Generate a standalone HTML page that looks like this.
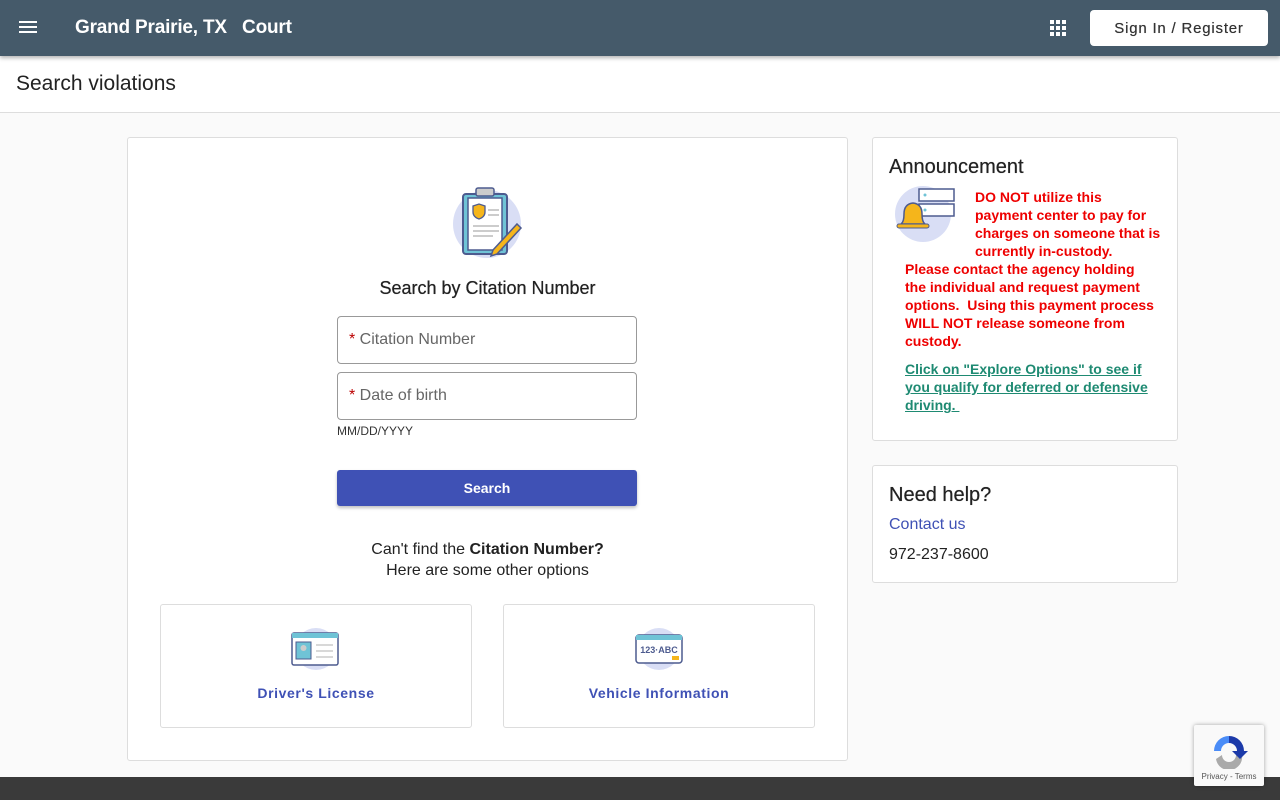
<!DOCTYPE html>
<html><head><meta charset="utf-8"><style>
*{box-sizing:border-box;margin:0;padding:0}
body{width:1280px;height:800px;overflow:hidden;background:#fafafa;font-family:"Liberation Sans",Arial,sans-serif;color:#222;position:relative}
.hdr{position:absolute;top:0;left:0;width:1280px;height:56px;background:#455a6a;box-shadow:0 2px 4px rgba(0,0,0,.3);z-index:2}
.hdr .t{position:absolute;left:75px;top:17px;color:#fff;font-weight:bold;font-size:19px;letter-spacing:-.2px}
.sign{position:absolute;left:1090px;top:10px;width:178px;height:36px;background:#fff;border-radius:4px;font-size:15px;color:#333;text-align:center;line-height:37px;letter-spacing:.8px;text-shadow:0 0 .4px #333}
.sub{position:absolute;top:56px;left:0;width:1280px;height:57px;background:#fff;border-bottom:1px solid #ddd}
.sub div{position:absolute;left:16px;top:16px;font-size:21px;color:#222}
.card{position:absolute;background:#fff;border:1px solid #ddd;border-radius:3px}
.inp{position:absolute;left:209px;width:300px;height:48px;border:1px solid #999;border-radius:4px;font-size:16px;color:#666;padding:14px 11px}
.inp b{color:#b00;font-weight:normal}
.opt{position:absolute;top:466px;width:312px;height:124px;border:1px solid #ddd;border-radius:3px;text-align:center}
.opt span{position:absolute;left:0;right:0;top:80px;color:#3f51b5;font-weight:bold;font-size:14px;letter-spacing:.6px}
.red{color:#e00;font-weight:bold;font-size:14px;line-height:18px;position:absolute}
</style></head><body>
<div class="hdr">
<svg style="position:absolute;left:19px;top:21px" width="18" height="14"><rect y="0" width="18" height="2" fill="#fff"/><rect y="5" width="18" height="2" fill="#fff"/><rect y="10" width="18" height="2" fill="#fff"/></svg>
<div class="t">Grand Prairie, TX &nbsp;&nbsp;Court</div>
<svg style="position:absolute;left:1050px;top:20px" width="16" height="16" fill="#fff"><rect x="0" y="0" width="4" height="4"/><rect x="6" y="0" width="4" height="4"/><rect x="12" y="0" width="4" height="4"/><rect x="0" y="6" width="4" height="4"/><rect x="6" y="6" width="4" height="4"/><rect x="12" y="6" width="4" height="4"/><rect x="0" y="12" width="4" height="4"/><rect x="6" y="12" width="4" height="4"/><rect x="12" y="12" width="4" height="4"/></svg>
<div class="sign">Sign In / Register</div>
</div>
<div class="sub"><div>Search violations</div></div>

<div class="card" style="left:127px;top:137px;width:721px;height:624px">
<svg style="position:absolute;left:323px;top:44px" width="76" height="80" viewBox="0 0 76 80">
<circle cx="36" cy="42" r="34" fill="#d9def5"/>
<rect x="12" y="12" width="44" height="60" rx="3" fill="#6fc3d6" stroke="#4d5b8f" stroke-width="2"/>
<rect x="17" y="16" width="34" height="52" fill="#fff" stroke="#4d5b8f" stroke-width="1.5"/>
<rect x="25" y="6" width="18" height="8" rx="2" fill="#ccc" stroke="#4d5b8f" stroke-width="1.5"/>
<path d="M22 24 l6-2 6 2 v6 q0 5 -6 7 q-6-2-6-7z" fill="#f5b51b" stroke="#4d5b8f" stroke-width="1.3"/>
<g stroke="#bbb" stroke-width="1.5"><line x1="37" y1="28" x2="48" y2="28"/><line x1="37" y1="33" x2="48" y2="33"/><line x1="22" y1="44" x2="48" y2="44"/><line x1="22" y1="49" x2="48" y2="49"/><line x1="22" y1="54" x2="42" y2="54"/></g>
<path d="M66 42 l4 4 -24 26 -6 2 2-6z" fill="#f5b51b" stroke="#4d5b8f" stroke-width="1.5"/>
</svg>
<div style="position:absolute;left:0;right:0;top:140px;text-align:center;font-size:18px;color:#222;text-shadow:0 0 .5px #222">Search by Citation Number</div>
<div class="inp" style="top:178px"><b>*</b> Citation Number</div>
<div class="inp" style="top:234px"><b>*</b> Date of birth</div>
<div style="position:absolute;left:209px;top:286px;font-size:12px;color:#333">MM/DD/YYYY</div>
<div style="position:absolute;left:209px;top:332px;width:300px;height:36px;background:#3f51b5;border-radius:3px;color:#fff;font-weight:bold;font-size:14px;text-align:center;line-height:36px;box-shadow:0 2px 3px rgba(0,0,0,.25)">Search</div>
<div style="position:absolute;left:0;right:0;top:401px;text-align:center;font-size:16px;line-height:21px;color:#222">Can't find the <b>Citation Number?</b><br>Here are some other options</div>
<div class="opt" style="left:32px">
<svg style="position:absolute;left:130px;top:22px" width="50" height="44"><circle cx="25" cy="22" r="21" fill="#d9def5"/><rect x="1" y="6" width="46" height="32" rx="2" fill="#fff" stroke="#4d5b8f" stroke-width="1.5"/><rect x="1" y="6" width="46" height="5" fill="#6fc3d6"/><rect x="5" y="15" width="15" height="17" fill="#6fc3d6" stroke="#4d5b8f"/><circle cx="12.5" cy="21" r="3" fill="#ccc"/><g stroke="#ccc" stroke-width="1.5"><line x1="25" y1="18" x2="42" y2="18"/><line x1="25" y1="24" x2="42" y2="24"/><line x1="25" y1="30" x2="42" y2="30"/></g></svg>
<span>Driver's License</span></div>
<div class="opt" style="left:375px">
<svg style="position:absolute;left:130px;top:22px" width="50" height="44"><circle cx="25" cy="22" r="21" fill="#d9def5"/><rect x="2" y="8" width="46" height="28" rx="3" fill="#fff" stroke="#4d5b8f" stroke-width="1.5"/><rect x="2" y="8" width="46" height="5" fill="#6fc3d6"/><text x="25" y="26" text-anchor="middle" font-size="9" font-weight="bold" fill="#4d5b8f" font-family="Liberation Sans">123·ABC</text><rect x="38" y="29" width="7" height="4" fill="#f5b51b"/></svg>
<span>Vehicle Information</span></div>
</div>

<div class="card" style="left:872px;top:137px;width:306px;height:304px">
<div style="position:absolute;left:16px;top:18px;font-size:20px;color:#222;text-shadow:0 0 .5px #222">Announcement</div>
<svg style="position:absolute;left:22px;top:46px" width="62" height="60"><circle cx="28" cy="30" r="28" fill="#d9def5"/><rect x="24" y="5" width="35" height="12" fill="#fff" stroke="#4d5b8f" stroke-width="1.5"/><rect x="24" y="20" width="35" height="12" fill="#fff" stroke="#4d5b8f" stroke-width="1.5"/><circle cx="30" cy="11" r="1.5" fill="#6fc3d6"/><circle cx="30" cy="26" r="1.5" fill="#6fc3d6"/><path d="M6 40 q3-2 3-10 q0-10 9-11 q9 1 9 11 q0 8 3 10z" fill="#f5b51b" stroke="#4d5b8f" stroke-width="1.5"/><rect x="2" y="40" width="32" height="4" rx="2" fill="#f5b51b" stroke="#4d5b8f"/></svg>
<div class="red" style="left:102px;top:50px">DO NOT utilize this<br>payment center to pay for<br>charges on someone that is<br>currently in-custody.</div>
<div class="red" style="left:32px;top:122px">Please contact the agency holding<br>the individual and request payment<br>options.&nbsp; Using this payment process<br>WILL NOT release someone from<br>custody.</div>
<div style="position:absolute;left:32px;top:222px;color:#1e8a72;font-weight:bold;font-size:14px;line-height:18px;text-decoration:underline">Click on "Explore Options" to see if<br>you qualify for deferred or defensive<br>driving.&nbsp;</div>
</div>

<div class="card" style="left:872px;top:465px;width:306px;height:118px">
<div style="position:absolute;left:16px;top:18px;font-size:20px;color:#222;text-shadow:0 0 .5px #222">Need help?</div>
<div style="position:absolute;left:16px;top:50px;font-size:16px;color:#3f51b5">Contact us</div>
<div style="position:absolute;left:16px;top:80px;font-size:16px;color:#222">972-237-8600</div>
</div>

<div style="position:absolute;left:0;top:777px;width:1280px;height:23px;background:#3a3a3a"></div>
<div style="position:absolute;left:1194px;top:725px;width:70px;height:61px;background:#f9f9f9;box-shadow:0 0 4px rgba(0,0,0,.35);border-radius:2px">
<svg style="position:absolute;left:16px;top:8px" width="38" height="36" viewBox="0 0 38 36"><path d="M6 26 A13 13 0 0 0 32 22 L26 22 A7 7 0 0 1 12 22 Z" fill="#aaa"/><path d="M4 18 A15 15 0 0 1 19 3 L19 10 A8 8 0 0 0 11 18 Z" fill="#4a8cf7"/><path d="M19 3 A15 15 0 0 1 34 18 L38 18 30 26 22 18 27 18 A8 8 0 0 0 19 10Z" fill="#1c3aa9"/></svg>
<div style="position:absolute;left:0;right:0;top:47px;text-align:center;font-size:8px;color:#555">Privacy - Terms</div>
</div>
</body></html>
